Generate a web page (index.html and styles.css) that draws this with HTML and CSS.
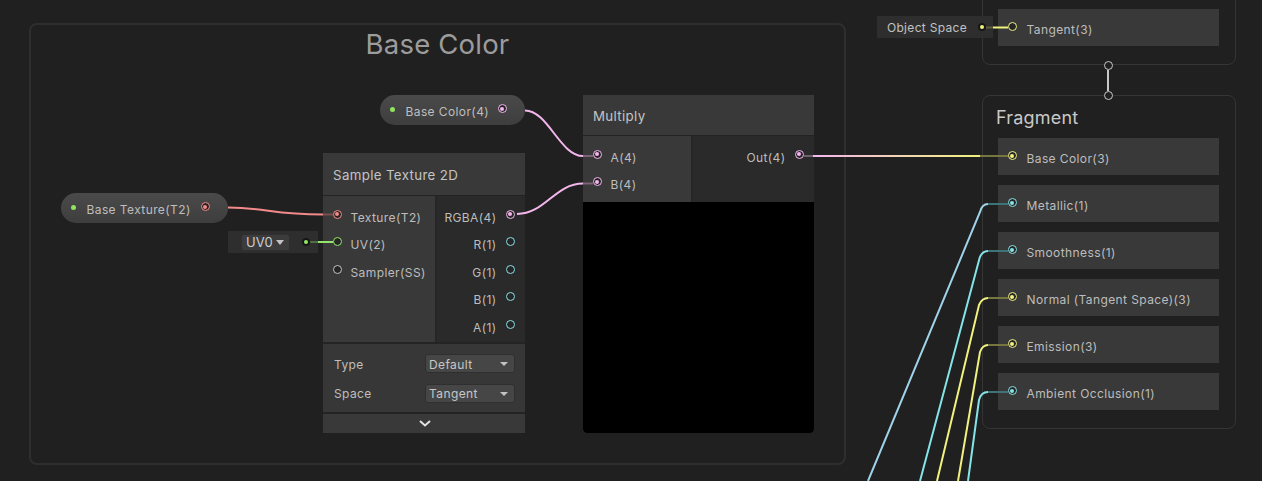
FILE: index.html
```html
<!DOCTYPE html>
<html lang="en">
<head>
<meta charset="utf-8">
<title>Shader Graph</title>
<link rel="stylesheet" href="styles.css">
</head>
<body>
<div class="canvas">
  <div class="group"><div class="group-title">Base Color</div></div>

  <div class="context vertex">
    <div class="block-row"><span class="port c-yellow"></span><span class="lbl">Tangent(3)</span></div>
  </div>

  <div class="context fragment">
    <div class="ctx-title">Fragment</div>
    <div class="block-row"><span class="port c-yellow on"></span><span class="lbl">Base Color(3)</span></div>
    <div class="block-row"><span class="port c-cyan on"></span><span class="lbl">Metallic(1)</span></div>
    <div class="block-row"><span class="port c-cyan on"></span><span class="lbl">Smoothness(1)</span></div>
    <div class="block-row"><span class="port c-yellow on"></span><span class="lbl">Normal (Tangent Space)(3)</span></div>
    <div class="block-row"><span class="port c-yellow on"></span><span class="lbl">Emission(3)</span></div>
    <div class="block-row"><span class="port c-cyan on"></span><span class="lbl">Ambient Occlusion(1)</span></div>
  </div>

  <div class="link-bar">
    <span class="link-knob"></span>
    <span class="link-line"></span>
    <span class="link-knob"></span>
  </div>

  <div class="inline-ctl obj-space">
    <span class="ctl-text">Object Space</span>
    <span class="ctl-dot c-yellow"></span>
  </div>

  <div class="inline-ctl uv-ctl">
    <span class="mini-drop">UV0<span class="tri"></span></span>
    <span class="ctl-dot c-green"></span>
  </div>

  <div class="prop prop-tex">
    <span class="dot"></span>
    <span class="prop-text">Base Texture(T2)</span>
    <span class="port c-red on"></span>
  </div>

  <div class="prop prop-col">
    <span class="dot"></span>
    <span class="prop-text">Base Color(4)</span>
    <span class="port c-pink on"></span>
  </div>

  <div class="node sample">
    <div class="node-title">Sample Texture 2D</div>
    <div class="node-body">
      <div class="inputs">
        <div class="slot"><span class="port c-red on"></span><span class="lbl">Texture(T2)</span></div>
        <div class="slot"><span class="port c-green"></span><span class="lbl">UV(2)</span></div>
        <div class="slot"><span class="port c-grey"></span><span class="lbl">Sampler(SS)</span></div>
      </div>
      <div class="outputs">
        <div class="slot out"><span class="lbl">RGBA(4)</span><span class="port c-pink on"></span></div>
        <div class="slot out"><span class="lbl">R(1)</span><span class="port c-cyan"></span></div>
        <div class="slot out"><span class="lbl">G(1)</span><span class="port c-cyan"></span></div>
        <div class="slot out"><span class="lbl">B(1)</span><span class="port c-cyan"></span></div>
        <div class="slot out"><span class="lbl">A(1)</span><span class="port c-cyan"></span></div>
      </div>
    </div>
    <div class="controls">
      <div class="ctl-row"><span class="ctl-label">Type</span><span class="drop">Default<span class="tri"></span></span></div>
      <div class="ctl-row"><span class="ctl-label">Space</span><span class="drop">Tangent<span class="tri"></span></span></div>
    </div>
    <div class="collapse">
      <svg width="12" height="7" viewBox="0 0 12 7"><path d="M1 1 L6 5.5 L11 1" fill="none" stroke="#e2e2e2" stroke-width="2"/></svg>
    </div>
  </div>

  <div class="node multiply">
    <div class="node-title">Multiply</div>
    <div class="node-body">
      <div class="inputs">
        <div class="slot"><span class="port c-pink on"></span><span class="lbl">A(4)</span></div>
        <div class="slot"><span class="port c-pink on"></span><span class="lbl">B(4)</span></div>
      </div>
      <div class="outputs">
        <div class="slot out"><span class="lbl">Out(4)</span><span class="port c-pink on"></span></div>
      </div>
    </div>
    <div class="preview"></div>
  </div>

  <svg class="edges" width="1262" height="481" viewBox="0 0 1262 481">
    <defs>
      <linearGradient id="outGrad" gradientUnits="userSpaceOnUse" x1="813" y1="0" x2="980" y2="0">
        <stop offset="0" stop-color="#f4b6ec"/>
        <stop offset="1" stop-color="#f1f17f"/>
      </linearGradient>
    </defs>
    <g fill="none" stroke-width="2" stroke-linecap="butt">
      <path d="M228 207.5 C268 208 272 214.5 323 214.5" stroke="#f28a8a"/>
      <path d="M323 214.5 L333 214.5" stroke="#7a4f4f"/>
      <path d="M310 242 L318 242" stroke="#4f6e45"/>
      <path d="M318 242 L333 242" stroke="#94e56c"/>
      <path d="M525 110.5 C548 110.5 560 156 583 156" stroke="#f4b6ec"/>
      <path d="M583 156 L593 156" stroke="#7b6378"/>
      <path d="M517 214 C545 214 555 183.5 583 183.5" stroke="#f4b6ec"/>
      <path d="M583 183.5 L593 183.5" stroke="#7b6378"/>
      <path d="M804 156 L813 156" stroke="#6e626c"/>
      <path d="M813 156 L980 156" stroke="url(#outGrad)"/>
      <path d="M980 156 L1008 156" stroke="#76763f"/>
      <path d="M986 27.5 L993 27.5" stroke="#5d5d3c"/>
      <path d="M993 27.5 L1008 27.5" stroke="#f1f17f"/>
      <path d="M988 204 Q982 204 980 212 L868 481" stroke="#9fd3ea"/>
      <path d="M988 204 L1008 204" stroke="#3e7478"/>
      <path d="M988 251 Q982 251 979.6 258 L920 481" stroke="#84e4e7"/>
      <path d="M988 251 L1008 251" stroke="#3e7478"/>
      <path d="M988 298 Q982 298 979 305 L937 481" stroke="#f1f17f"/>
      <path d="M988 298 L1008 298" stroke="#76763f"/>
      <path d="M988 345 Q982.5 345 980 352 L958 481" stroke="#f1f17f"/>
      <path d="M988 345 L1008 345" stroke="#76763f"/>
      <path d="M988 392 Q981 392 979 400 L968 481" stroke="#84e4e7"/>
      <path d="M988 392 L1008 392" stroke="#3e7478"/>
    </g>
  </svg>
</div>
</body>
</html>
```

FILE: styles.css
```css
* { box-sizing: border-box; margin: 0; padding: 0; }

html, body {
  width: 1262px;
  height: 481px;
  overflow: hidden;
  background: #202020;
}

body {
  font-family: Inter, "Noto Sans", sans-serif;
  font-size: 12px;
  letter-spacing: 0.4px;
  color: #bdbdbd;
}

.canvas {
  position: relative;
  width: 1262px;
  height: 481px;
}

/* ---------- group ---------- */
.group {
  position: absolute;
  left: 29px;
  top: 23px;
  width: 817px;
  height: 442px;
  border: 2px solid #2e2e2e;
  border-radius: 8px;
}

.group-title {
  text-align: center;
  font-size: 27.5px;
  line-height: 34px;
  letter-spacing: 0.2px;
  color: #9c9c9c;
  padding-top: 2px;
}

/* ---------- contexts ---------- */
.context {
  position: absolute;
  left: 982px;
  width: 254px;
  border: 1px solid #353535;
  border-radius: 8px;
  display: flex;
  flex-direction: column;
}

.vertex {
  top: -30px;
  height: 95px;
  padding: 38px 16px 0 15px;
}

.fragment {
  top: 95px;
  height: 334px;
  padding: 11px 16px 0 15px;
  gap: 10.5px;
}

.ctx-title {
  font-size: 18px;
  line-height: 22px;
  letter-spacing: 0.2px;
  color: #c9c9c9;
  margin: 0 0 -1.5px -2px;
}

.block-row {
  height: 36.5px;
  background: #393939;
  display: flex;
  align-items: flex-start;
  padding: 13px 0 0 9.5px;
  gap: 10px;
  flex: none;
}

.block-row .lbl {
  line-height: 16px;
  white-space: nowrap;
}

/* ---------- ports ---------- */
.port {
  position: relative;
  z-index: 2;
  flex: none;
  width: 9px;
  height: 9px;
  border-radius: 50%;
  border: 1.5px solid currentColor;
  background: #252525;
  display: flex;
  align-items: center;
  justify-content: center;
}

.port.on::after {
  content: "";
  width: 4px;
  height: 4px;
  border-radius: 50%;
  background: currentColor;
}

.c-red { color: #f28a8a; }
.c-green { color: #94e56c; }
.c-pink { color: #f4b6ec; }
.c-cyan { color: #84e4e7; }
.c-yellow { color: #f1f17f; }
.c-grey { color: #c4c4c4; }

/* ---------- link between contexts ---------- */
.link-bar {
  position: absolute;
  left: 1103.5px;
  top: 60.5px;
  width: 9px;
  height: 39px;
  display: flex;
  flex-direction: column;
  align-items: center;
}

.link-knob {
  width: 9px;
  height: 9px;
  border-radius: 50%;
  border: 1.5px solid #c8c8c8;
  background: #202020;
  flex: none;
}

.link-line {
  width: 2px;
  flex: 1;
  background: #c8c8c8;
}

/* ---------- inline port controls ---------- */
.inline-ctl {
  position: absolute;
  display: flex;
  align-items: center;
  background: #2e2e2e;
}

.obj-space {
  left: 877px;
  top: 16px;
  width: 116px;
  height: 21.5px;
  padding-left: 10px;
}

.ctl-text {
  color: #c2c2c2;
  padding-top: 1px;
  letter-spacing: 0.3px;
  white-space: nowrap;
}

.obj-space .ctl-dot {
  margin-left: auto;
  margin-right: 7px;
}

.ctl-dot {
  position: relative;
  z-index: 2;
  width: 8px;
  height: 8px;
  border-radius: 50%;
  background: #161616;
  display: flex;
  align-items: center;
  justify-content: center;
  flex: none;
}

.ctl-dot::after {
  content: "";
  width: 4px;
  height: 4px;
  border-radius: 50%;
  background: currentColor;
}

.uv-ctl {
  left: 228px;
  top: 231px;
  width: 90px;
  height: 22px;
  padding-left: 13px;
}

.mini-drop {
  width: 49px;
  height: 17px;
  background: #3c3c3c;
  border: 1px solid #303030;
  border-radius: 3px;
  display: flex;
  align-items: center;
  padding-left: 4px;
  font-size: 13px;
  letter-spacing: 0;
  color: #cfcfcf;
}

.uv-ctl .ctl-dot {
  margin-left: auto;
  margin-right: 8px;
}

.tri {
  width: 0;
  height: 0;
  border-left: 4.5px solid transparent;
  border-right: 4.5px solid transparent;
  border-top: 5px solid #c4c4c4;
  margin-left: auto;
  margin-right: 5px;
}

/* ---------- property pills ---------- */
.prop {
  position: absolute;
  display: flex;
  align-items: center;
  height: 30px;
  border-radius: 15px;
  background: linear-gradient(#4a4a4a, #3e3e3e);
}

.prop .dot {
  width: 5px;
  height: 5px;
  border-radius: 50%;
  background: #8fe35e;
  flex: none;
  margin: 0 10.5px 2px 0;
}

.prop-text {
  color: #bebebe;
  padding-top: 3px;
  white-space: nowrap;
  flex: none;
}

.prop .port {
  margin-left: auto;
  margin-bottom: 3px;
}

.prop-tex {
  left: 61px;
  top: 193px;
  width: 167px;
  padding: 0 18.5px 0 10px;
}

.prop-col {
  left: 380px;
  top: 95px;
  width: 145px;
  padding: 0 18.5px 0 10px;
}

/* ---------- nodes ---------- */
.node {
  position: absolute;
  display: flex;
  flex-direction: column;
  background: #2a2a2a;
}

.node-title {
  display: flex;
  align-items: center;
  padding: 2px 0 0 10px;
  background: #393939;
  border-bottom: 1px solid #232323;
  font-size: 13.3px;
  letter-spacing: 0.35px;
  color: #c4c4c4;
  flex: none;
  white-space: nowrap;
}

.node-body {
  display: flex;
  flex: none;
}

.inputs {
  background: #393939;
  border-right: 2px solid #262626;
  padding-top: 6px;
}

.outputs {
  flex: 1;
  background: #2a2a2a;
  padding-top: 6px;
}

.slot {
  height: 27.5px;
  display: flex;
  align-items: center;
  gap: 9px;
  padding-left: 9.5px;
}

.slot .port {
  margin-bottom: 3px;
}

.slot .lbl {
  padding-top: 3px;
  white-space: nowrap;
}

.slot.out {
  justify-content: flex-end;
  padding-left: 0;
  padding-right: 10.5px;
}

/* sample texture 2d */
.sample {
  left: 323px;
  top: 153px;
  width: 202px;
  height: 280px;
}

.sample .node-title { height: 43px; }
.sample .node-body { height: 148px; border-bottom: 2px solid #242424; }
.sample .inputs { width: 114px; }

.controls {
  background: #373737;
  padding: 10px 10px 0 11px;
  height: 70px;
  display: flex;
  flex-direction: column;
  gap: 10.5px;
  border-bottom: 2px solid #242424;
  flex: none;
}

.ctl-row {
  display: flex;
  align-items: center;
  height: 19px;
}

.ctl-label {
  color: #bebebe;
  padding-top: 1px;
}

.drop {
  margin-left: auto;
  width: 90px;
  height: 19px;
  background: #464646;
  border: 1px solid #2f2f2f;
  border-radius: 3px;
  display: flex;
  align-items: center;
  padding: 1px 0 0 3px;
  color: #c6c6c6;
}

.drop .tri {
  margin-right: 6px;
  border-left-width: 4px;
  border-right-width: 4px;
  border-top-width: 4px;
}

.collapse {
  flex: 1;
  background: #393939;
  display: flex;
  align-items: center;
  justify-content: center;
  padding-left: 1px;
}

/* multiply */
.multiply {
  left: 583px;
  top: 95px;
  width: 231px;
  height: 338px;
  border-radius: 0 0 4px 4px;
  overflow: hidden;
}

.multiply .node-title { height: 41px; }
.multiply .node-body { height: 66px; }
.multiply .inputs { width: 110px; }

.preview {
  flex: 1;
  background: #000;
  border-radius: 0 0 4px 4px;
}

/* ---------- edges ---------- */
.edges {
  position: absolute;
  left: 0;
  top: 0;
  z-index: 1;
  pointer-events: none;
}
```
